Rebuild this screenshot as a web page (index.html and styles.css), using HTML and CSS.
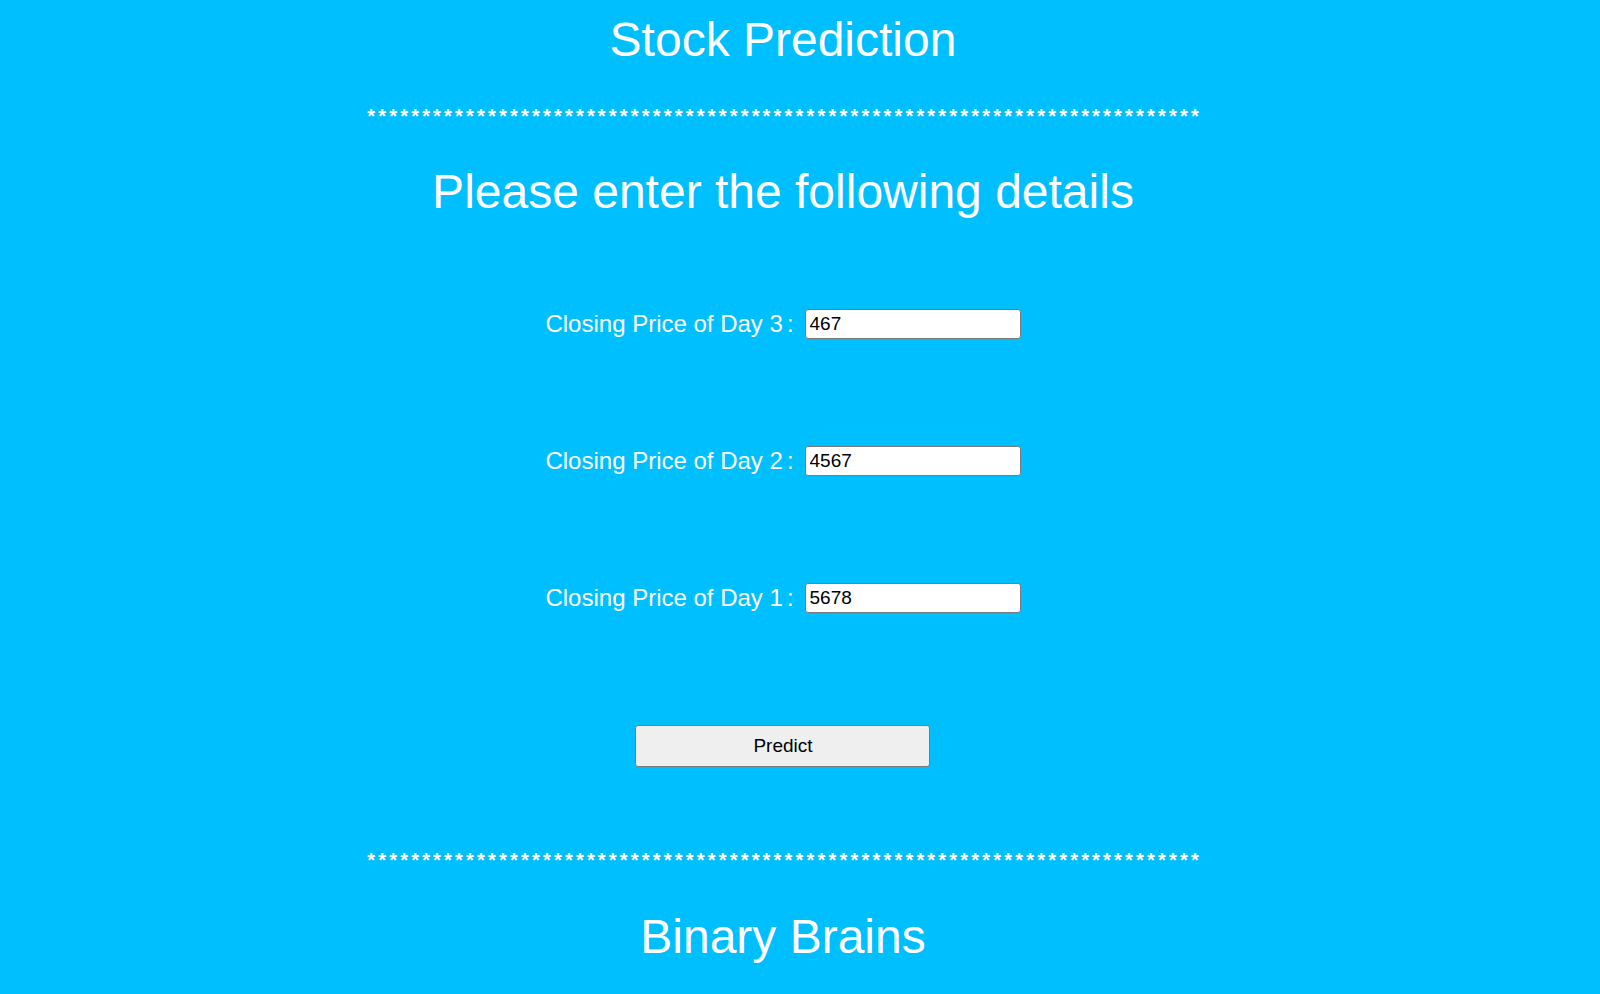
FILE: index.html
```html
<!DOCTYPE html>
<html lang="en">
<head>
<meta charset="utf-8">
<title>Stock Prediction</title>
<link rel="stylesheet" href="styles.css">
</head>
<body>
<div class="page">
  <h1 class="title">Stock Prediction</h1>
  <p class="stars">****************************************************************************</p>
  <h2 class="subtitle">Please enter the following details</h2>
  <form class="form">
    <div class="row">
      <label class="label" for="d3">Closing Price of Day 3<span class="colon">:</span></label>
      <input class="field" id="d3" type="text" value="467">
    </div>
    <div class="row">
      <label class="label" for="d2">Closing Price of Day 2<span class="colon">:</span></label>
      <input class="field" id="d2" type="text" value="4567">
    </div>
    <div class="row">
      <label class="label" for="d1">Closing Price of Day 1<span class="colon">:</span></label>
      <input class="field" id="d1" type="text" value="5678">
    </div>
    <button class="predict" type="button">Predict</button>
  </form>
  <p class="stars stars-bottom">****************************************************************************</p>
  <h1 class="footer">Binary Brains</h1>
</div>
</body>
</html>
```

FILE: styles.css
```css
html, body {
  margin: 0;
  padding: 0;
  background: #00bfff;
}

body {
  font-family: "Liberation Sans", Arial, sans-serif;
  color: #ffffff;
}

.page {
  box-sizing: border-box;
  width: 1600px;
  padding-right: 34px;
  display: flex;
  flex-direction: column;
  align-items: center;
  text-align: center;
}

.title,
.subtitle,
.footer {
  margin: 0;
  font-size: 48px;
  font-weight: normal;
  line-height: 56px;
  white-space: nowrap;
}

.title {
  margin-top: 12px;
}

.stars {
  margin: 36px 0 0;
  font-size: 20px;
  font-weight: bold;
  line-height: 24px;
  letter-spacing: 3.2px;
  padding-left: 3.2px;
  white-space: nowrap;
}

.subtitle {
  margin-top: 36px;
}

.form {
  display: flex;
  flex-direction: column;
  align-items: center;
  margin-top: 89px;
}

.row {
  display: flex;
  align-items: center;
  gap: 11px;
  height: 30px;
  margin-bottom: 107px;
}

.row:last-of-type {
  margin-bottom: 112px;
}

.label {
  font-size: 24px;
  line-height: 30px;
  white-space: nowrap;
}

.colon {
  margin-left: 4px;
}

.field {
  box-sizing: border-box;
  width: 216px;
  height: 30px;
  margin: 0;
  padding: 0 4px;
  border: 1px solid #7a7a7a;
  border-radius: 3px;
  background: #ffffff;
  color: #000000;
  font-family: "Liberation Sans", Arial, sans-serif;
  font-size: 19px;
}

.predict {
  box-sizing: border-box;
  width: 295px;
  height: 42px;
  margin: 0;
  border: 1px solid #7a7a7a;
  border-radius: 3px;
  background: #efefef;
  color: #000000;
  font-family: "Liberation Sans", Arial, sans-serif;
  font-size: 19px;
}

.stars-bottom {
  margin-top: 81px;
}

.footer {
  margin-top: 37px;
}
```
